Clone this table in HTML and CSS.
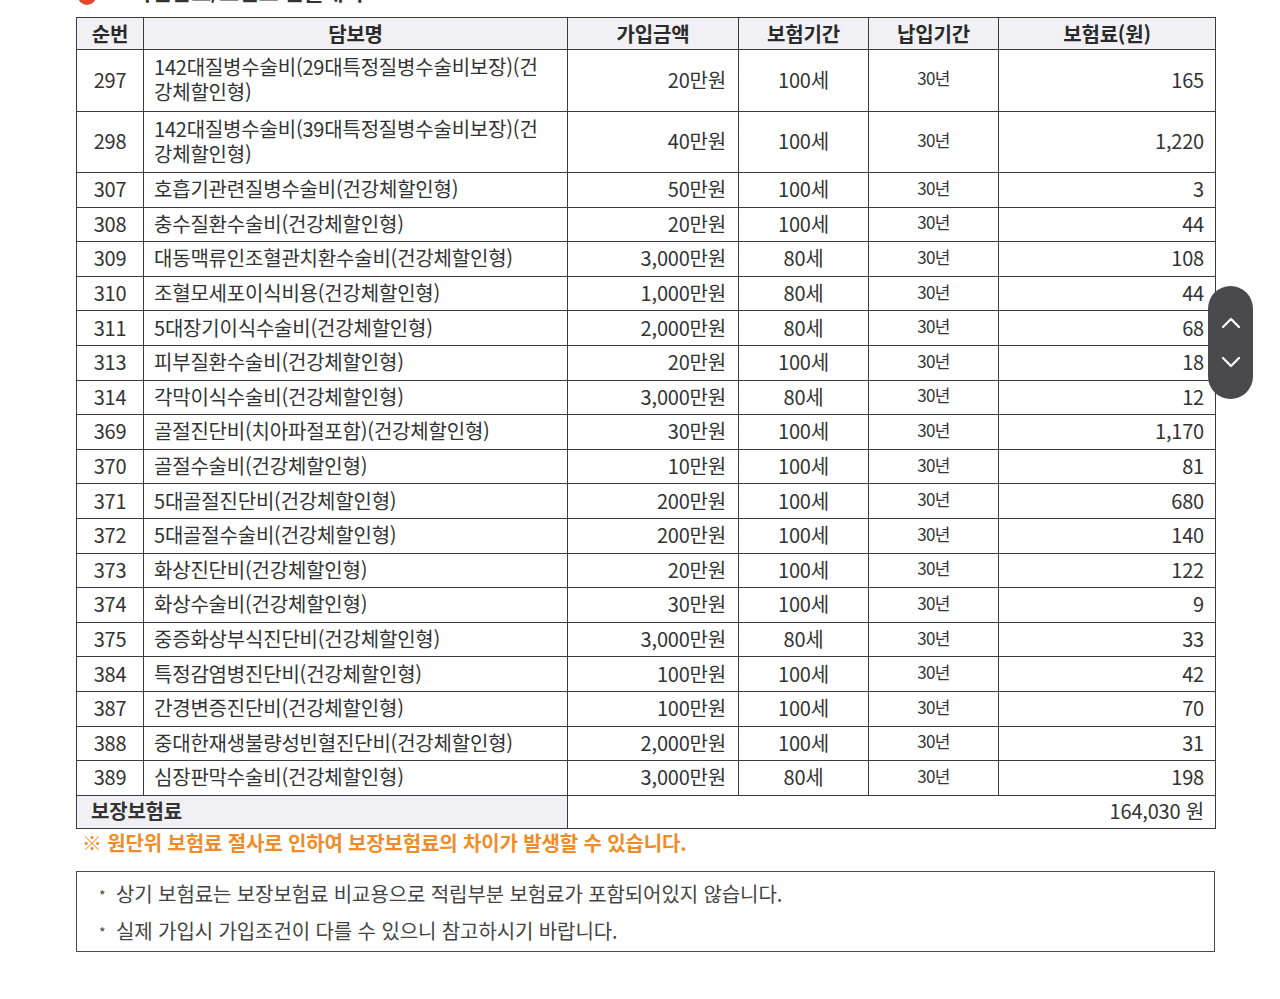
FILE: index.html
```html
<!DOCTYPE html>
<html lang="ko">
<head>
<meta charset="utf-8">
<title>보장내용</title>
<link rel="stylesheet" href="styles.css">
</head>
<body>
<div class="page">
  <div class="heading"><span class="dot"></span><span class="heading-text">가입담보/보험료 산출내역</span></div>
  <table class="grid">
    <colgroup>
      <col class="c-no"><col class="c-name"><col class="c-amt"><col class="c-term"><col class="c-pay"><col class="c-prem">
    </colgroup>
    <thead>
      <tr><th>순번</th><th>담보명</th><th>가입금액</th><th>보험기간</th><th>납입기간</th><th>보험료(원)</th></tr>
    </thead>
    <tbody>
      <tr class="tall"><td class="no">297</td><td class="name">142대질병수술비(29대특정질병수술비보장)(건강체할인형)</td><td class="amt">20만원</td><td class="term">100세</td><td class="pay">30년</td><td class="prem">165</td></tr>
      <tr class="tall"><td class="no">298</td><td class="name">142대질병수술비(39대특정질병수술비보장)(건강체할인형)</td><td class="amt">40만원</td><td class="term">100세</td><td class="pay">30년</td><td class="prem">1,220</td></tr>
      <tr><td class="no">307</td><td class="name">호흡기관련질병수술비(건강체할인형)</td><td class="amt">50만원</td><td class="term">100세</td><td class="pay">30년</td><td class="prem">3</td></tr>
      <tr><td class="no">308</td><td class="name">충수질환수술비(건강체할인형)</td><td class="amt">20만원</td><td class="term">100세</td><td class="pay">30년</td><td class="prem">44</td></tr>
      <tr><td class="no">309</td><td class="name">대동맥류인조혈관치환수술비(건강체할인형)</td><td class="amt">3,000만원</td><td class="term">80세</td><td class="pay">30년</td><td class="prem">108</td></tr>
      <tr><td class="no">310</td><td class="name">조혈모세포이식비용(건강체할인형)</td><td class="amt">1,000만원</td><td class="term">80세</td><td class="pay">30년</td><td class="prem">44</td></tr>
      <tr><td class="no">311</td><td class="name">5대장기이식수술비(건강체할인형)</td><td class="amt">2,000만원</td><td class="term">80세</td><td class="pay">30년</td><td class="prem">68</td></tr>
      <tr><td class="no">313</td><td class="name">피부질환수술비(건강체할인형)</td><td class="amt">20만원</td><td class="term">100세</td><td class="pay">30년</td><td class="prem">18</td></tr>
      <tr><td class="no">314</td><td class="name">각막이식수술비(건강체할인형)</td><td class="amt">3,000만원</td><td class="term">80세</td><td class="pay">30년</td><td class="prem">12</td></tr>
      <tr><td class="no">369</td><td class="name">골절진단비(치아파절포함)(건강체할인형)</td><td class="amt">30만원</td><td class="term">100세</td><td class="pay">30년</td><td class="prem">1,170</td></tr>
      <tr><td class="no">370</td><td class="name">골절수술비(건강체할인형)</td><td class="amt">10만원</td><td class="term">100세</td><td class="pay">30년</td><td class="prem">81</td></tr>
      <tr><td class="no">371</td><td class="name">5대골절진단비(건강체할인형)</td><td class="amt">200만원</td><td class="term">100세</td><td class="pay">30년</td><td class="prem">680</td></tr>
      <tr><td class="no">372</td><td class="name">5대골절수술비(건강체할인형)</td><td class="amt">200만원</td><td class="term">100세</td><td class="pay">30년</td><td class="prem">140</td></tr>
      <tr><td class="no">373</td><td class="name">화상진단비(건강체할인형)</td><td class="amt">20만원</td><td class="term">100세</td><td class="pay">30년</td><td class="prem">122</td></tr>
      <tr><td class="no">374</td><td class="name">화상수술비(건강체할인형)</td><td class="amt">30만원</td><td class="term">100세</td><td class="pay">30년</td><td class="prem">9</td></tr>
      <tr><td class="no">375</td><td class="name">중증화상부식진단비(건강체할인형)</td><td class="amt">3,000만원</td><td class="term">80세</td><td class="pay">30년</td><td class="prem">33</td></tr>
      <tr><td class="no">384</td><td class="name">특정감염병진단비(건강체할인형)</td><td class="amt">100만원</td><td class="term">100세</td><td class="pay">30년</td><td class="prem">42</td></tr>
      <tr><td class="no">387</td><td class="name">간경변증진단비(건강체할인형)</td><td class="amt">100만원</td><td class="term">100세</td><td class="pay">30년</td><td class="prem">70</td></tr>
      <tr><td class="no">388</td><td class="name">중대한재생불량성빈혈진단비(건강체할인형)</td><td class="amt">2,000만원</td><td class="term">100세</td><td class="pay">30년</td><td class="prem">31</td></tr>
      <tr><td class="no">389</td><td class="name">심장판막수술비(건강체할인형)</td><td class="amt">3,000만원</td><td class="term">80세</td><td class="pay">30년</td><td class="prem">198</td></tr>
    </tbody>
    <tfoot>
      <tr><td class="total-label" colspan="2">보장보험료</td><td class="total-value" colspan="4">164,030 원</td></tr>
    </tfoot>
  </table>
  <p class="warn">※ 원단위 보험료 절사로 인하여 보장보험료의 차이가 발생할 수 있습니다.</p>
  <div class="notes">
    <p class="note"><span class="star">*</span>상기 보험료는 보장보험료 비교용으로 적립부분 보험료가 포함되어있지 않습니다.</p>
    <p class="note"><span class="star">*</span>실제 가입시 가입조건이 다를 수 있으니 참고하시기 바랍니다.</p>
  </div>
</div>
<div class="scroller">
  <svg class="chev" width="20" height="12" viewBox="0 0 20 12"><path d="M2 10 L10 2 L18 10" fill="none" stroke="#fff" stroke-width="2.2" stroke-linecap="round" stroke-linejoin="round"/></svg>
  <svg class="chev" width="20" height="12" viewBox="0 0 20 12"><path d="M2 2 L10 10 L18 2" fill="none" stroke="#fff" stroke-width="2.2" stroke-linecap="round" stroke-linejoin="round"/></svg>
</div>
</body>
</html>
```

FILE: styles.css
```css
html, body {
  margin: 0;
  padding: 0;
  background: #ffffff;
}
body {
  font-family: "Noto Sans CJK KR", "Noto Sans", sans-serif;
  color: #333;
  overflow: hidden;
}
.page {
  padding-left: 76px;
  width: 1139px;
}
.heading {
  display: flex;
  align-items: center;
  gap: 36px;
  height: 26px;
  margin-top: -23px;
  margin-bottom: 14px;
}
.dot {
  align-self: flex-end;
  width: 18px;
  height: 18px;
  margin-left: 2px;
  margin-bottom: -2px;
  border-radius: 50%;
  background: #e4472c;
}
.heading-text {
  font-size: 22px;
  font-weight: 700;
  line-height: 26px;
  color: #333;
  letter-spacing: -0.5px;
}
.grid {
  border-collapse: collapse;
  width: 1139px;
  table-layout: fixed;
  font-size: 20px;
  letter-spacing: -0.2px;
  color: #333;
}
.c-no { width: 67px; }
.c-name { width: 424px; }
.c-amt { width: 171px; }
.c-term { width: 130px; }
.c-pay { width: 130px; }
.c-prem { width: 217px; }
.grid th, .grid td {
  border: 1px solid #3c3a3c;
  padding: 0;
  line-height: 25px;
}
.grid th {
  height: 31px;
  background: #f1f0f4;
  font-weight: 700;
  font-size: 20px;
  text-align: center;
  color: #2a2a2a;
}
.grid tbody tr {
  height: 34.6px;
}
.grid tbody tr.tall {
  height: 61.5px;
}
.grid td {
  padding-bottom: 2px;
}
.no { text-align: center; }
.name {
  text-align: left;
  padding: 0 20px 2px 10px !important;
}
.amt {
  text-align: right;
  padding-right: 12px !important;
}
.term { text-align: center; }
.pay {
  text-align: center;
  font-size: 17px;
  letter-spacing: -0.6px;
  padding-bottom: 5px !important;
}
.prem {
  text-align: right;
  padding-right: 11px !important;
}
.grid tfoot tr {
  height: 33px;
}
.total-label {
  background: #f1f0f4;
  font-weight: 700;
  text-align: left;
  padding-left: 14px !important;
}
.total-value {
  text-align: right;
  padding-right: 11px !important;
}
.warn {
  margin: 0 0 0 6px;
  font-size: 20px;
  line-height: 28px;
  font-weight: 700;
  color: #f08c28;
  letter-spacing: -0.15px;
}
.notes {
  margin-top: 14px;
  border: 1px solid #4a4a4a;
  padding: 3px 0 2px 22px;
}
.note {
  margin: 0;
  font-size: 20px;
  line-height: 37px;
  height: 37px;
  color: #444;
  letter-spacing: -0.1px;
}
.star {
  display: inline-block;
  width: 17px;
  font-size: 14px;
  line-height: 0;
  vertical-align: 1px;
}
.scroller {
  position: fixed;
  left: 1208px;
  top: 286px;
  width: 45px;
  height: 113px;
  border-radius: 23px;
  background: #4a4a4c;
  display: flex;
  flex-direction: column;
  align-items: center;
  justify-content: center;
  gap: 27px;
}
.chev { display: block; }
```
